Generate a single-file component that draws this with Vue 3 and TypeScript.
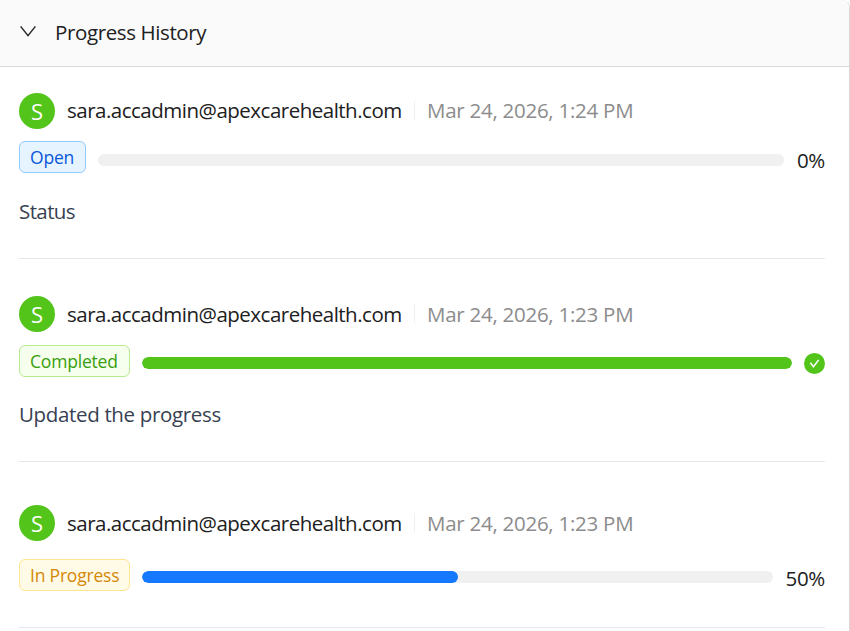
<script setup lang="ts">
interface HistoryEntry {
  id: number
  kind: 'open' | 'completed' | 'active'
  label: string
  date: string
  percent: number
  comment?: string
}

const email = 'sara.accadmin@apexcarehealth.com'
const entries: HistoryEntry[] = [
  { id: 1, kind: 'open', label: 'Open', date: 'Mar 24, 2026, 1:24 PM', percent: 0, comment: 'Status' },
  { id: 2, kind: 'completed', label: 'Completed', date: 'Mar 24, 2026, 1:23 PM', percent: 100, comment: 'Updated the progress' },
  { id: 3, kind: 'active', label: 'In Progress', date: 'Mar 24, 2026, 1:23 PM', percent: 50 },
]
</script>

<template>
  <section class="panel">
    <header class="panel-header">
      <svg class="chevron" viewBox="0 0 18 18" width="18" height="18" aria-hidden="true">
        <path d="M1.6 4.4 L9 13.6 L16.4 4.4" fill="none" stroke="#262626" stroke-width="1.5" />
      </svg>
      <span class="panel-title">Progress History</span>
    </header>
    <ul class="entries">
      <li v-for="entry in entries" :key="entry.id" class="entry" :class="entry.kind">
        <div class="byline">
          <span class="avatar">S</span>
          <span class="email">{{ email }}</span>
          <span class="separator"></span>
          <time class="date">{{ entry.date }}</time>
        </div>
        <div class="status-row">
          <span class="tag"><span class="tag-label">{{ entry.label }}</span></span>
          <div class="track">
            <div class="fill" :style="{ width: entry.percent + '%' }"></div>
          </div>
          <svg v-if="entry.percent === 100" class="done" viewBox="0 0 21 21" width="21" height="21" aria-hidden="true">
            <circle cx="10.5" cy="10.5" r="10.5" fill="#52c41a" />
            <path d="M6.4 9.8 L9.4 13.8 L14.6 7" fill="none" stroke="#fff" stroke-width="1.5" />
          </svg>
          <span v-else class="percent">{{ entry.percent }}%</span>
        </div>
        <p v-if="entry.comment" class="comment">{{ entry.comment }}</p>
      </li>
    </ul>
  </section>
</template>

<style>
body {
  background: #fff;
  overflow: hidden;
}
</style>

<style scoped>
.panel {
  box-sizing: border-box;
  height: 631px;
  overflow: hidden;
  border-right: 1px solid #d9d9d9;
  border-top-right-radius: 8px;
  font-family: "Segoe UI", "Open Sans", "Noto Sans", sans-serif;
  font-size: 20.5px;
  color: #202020;
}
.panel-header {
  box-sizing: border-box;
  height: 67px;
  display: flex;
  align-items: center;
  gap: 18px;
  padding: 0 19px;
  background: #fafafa;
  border-bottom: 1px solid #d9d9d9;
}
.chevron {
  flex: none;
  margin-top: -4px;
}
.panel-title {
  margin-top: -2px;
  line-height: 32px;
  letter-spacing: -0.38px;
}
.entries {
  list-style: none;
  margin: 0;
  padding: 0 24px 0 19px;
}
.entry {
  box-sizing: border-box;
  border-bottom: 1px solid #e5e7eb;
}
.open {
  height: 192px;
  padding-top: 26px;
}
.completed {
  height: 203px;
  padding-top: 37px;
}
.active {
  height: 166px;
  padding-top: 43px;
}
.byline {
  height: 36px;
  display: flex;
  align-items: center;
  white-space: nowrap;
}
.avatar {
  width: 36px;
  height: 36px;
  flex: none;
  border-radius: 50%;
  background: #52c41a;
  color: #fff;
  text-align: center;
  font-size: 22px;
  line-height: 37px;
}
.email {
  width: 335px;
  margin-left: 12px;
  letter-spacing: -0.5px;
}
.separator {
  width: 1px;
  height: 19px;
  margin: -2px 12px 0 12px;
  background: #f0f0f0;
}
.date {
  color: #8c8c8c;
  letter-spacing: -0.26px;
}
.open .email,
.open .date {
  margin-top: -2px;
}
.status-row {
  display: flex;
  align-items: center;
  height: 32px;
  margin-top: 12px;
}
.completed .status-row {
  margin-top: 13px;
}
.active .status-row {
  margin-top: 18px;
}
.tag {
  box-sizing: border-box;
  width: 111px;
  height: 32px;
  flex: none;
  padding-left: 10px;
  border: 1px solid;
  border-radius: 6px;
  font-size: 17.5px;
  line-height: 31px;
  white-space: nowrap;
  letter-spacing: -0.2px;
}
.open .tag {
  width: 67px;
  color: #0958d9;
  background: #e6f4ff;
  border-color: #91caff;
}
.completed .tag {
  color: #389e0d;
  background: #f6ffed;
  border-color: #b7eb8f;
}
.active .tag {
  color: #d48806;
  background: #fffbe6;
  border-color: #ffe58f;
}
.track {
  flex: 1;
  height: 12px;
  margin: 4px 12px 0;
  border-radius: 6px;
  background: #f0f0f0;
  overflow: hidden;
}
.open .track {
  margin-top: 6px;
}
.fill {
  height: 100%;
  border-radius: 6px;
  background: #1677ff;
}
.completed .fill {
  background: #52c41a;
}
.done {
  flex: none;
  margin-top: 5px;
}
.percent {
  width: 40px;
  flex: none;
  text-align: right;
  line-height: 32px;
  margin-top: 6px;
  letter-spacing: -0.3px;
}
.open .percent {
  width: 29px;
}
.comment {
  margin: 22px 0 0;
  line-height: 32px;
  color: #374151;
  letter-spacing: -0.34px;
}
.open .comment {
  letter-spacing: -0.6px;
}
.completed .comment {
  margin-top: 21px;
}
</style>
